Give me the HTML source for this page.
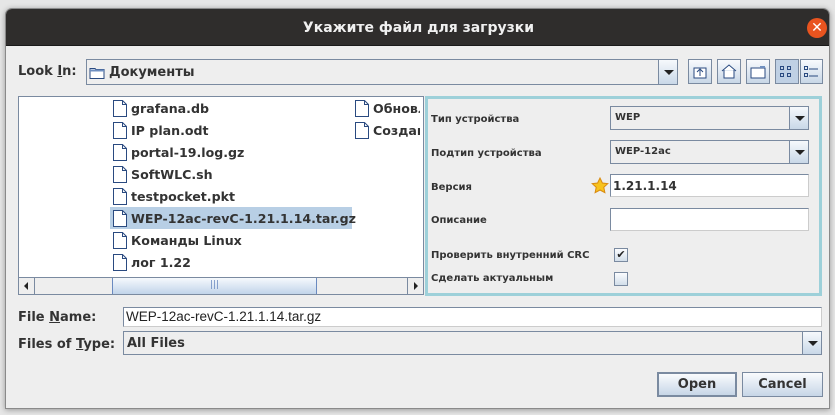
<!DOCTYPE html>
<html><head><meta charset="utf-8"><style>
*{margin:0;padding:0;box-sizing:border-box}
body{width:835px;height:415px;background:#e6e6e6;position:relative;overflow:hidden;font-family:"DejaVu Sans","Liberation Sans",sans-serif;color:#333}
.a{position:absolute}
#dlg{left:5px;top:8px;width:825px;height:401px;background:#eeeeee;border:1px solid #8a8a8a;border-radius:7px 7px 0 0;box-shadow:0 1px 6px rgba(0,0,0,.35);overflow:hidden}
#title{left:0;top:0;width:825px;height:37px;background:#2f2d2c;color:#f0f0f0;font-weight:bold;font-size:14px;line-height:38px;text-align:center;border-bottom:1px solid #1a1a1a}
.lbl{font-size:13px;font-weight:bold;color:#333}
.combo{border:1px solid #7a8aa0;background:#eeeeee}
.arrow{position:absolute;right:0;top:0;bottom:0;width:19px;border-left:1px solid #7a8aa0;background:linear-gradient(#f6f9fc,#c9d8e8)}
.arrow:after{content:"";position:absolute;left:5px;top:50%;margin-top:-2px;border-left:5px solid transparent;border-right:5px solid transparent;border-top:5px solid #222}
.tb{top:59px;width:24px;height:25px;border:1px solid #7a8aa0;background:linear-gradient(#f8fafd,#c8d7e7)}
.file{font-size:12.6px;font-weight:bold;color:#333;height:22px;line-height:23px;padding-left:18px;white-space:nowrap}
.file svg{position:absolute;left:0;top:3px}
.pl{font-size:10px;font-weight:bold;color:#333;left:431px}
.tf{background:#fff;border:1px solid #7a8aa0;border-right-color:#ccc;border-bottom-color:#ccc}
.cb{width:14px;height:14px;border:1px solid #7a8aa0;background:linear-gradient(#fbfcfe,#d2deea)}
.btn{top:372px;height:25px;border:1px solid #7a8aa0;background:linear-gradient(#f9fbfd,#c7d6e7);font-weight:bold;font-size:13px;text-align:center;line-height:24px;color:#333}
</style></head><body>
<div id="dlg" class="a">
<div id="title" class="a">Укажите файл для загрузки</div>
<div class="a" style="left:801px;top:9px;width:20px;height:20px;border-radius:50%;background:#e9541f;color:#fff;font-size:14px;line-height:20px;text-align:center">✕</div>
</div>

<div class="a lbl" style="left:18px;top:64px">Look <u>I</u>n:</div>
<div class="a combo" style="left:86px;top:59px;width:592px;height:26px">
<svg class="a" style="left:2px;top:6px" width="16" height="13"><path d="M1 2.5h5l1 1h8v9H1z" fill="#fff" stroke="#2a4a80"/><path d="M1 4.5h14" stroke="#6f8fc0" stroke-width="2"/></svg>
<div class="a lbl" style="left:22px;top:5px">Документы</div>
<div class="arrow"></div></div>
<div class="a tb" style="left:688px"><svg width="22" height="23"><path d="M5 8h12v10H5z" fill="#fff" stroke="#2a4a80"/><path d="M11 16v-6M8 12l3-3 3 3" stroke="#2a4a80" fill="none"/></svg></div>
<div class="a tb" style="left:717px"><svg width="22" height="23"><path d="M4 11l7-6 7 6M6 10v8h10v-8" fill="#fff" stroke="#2a4a80"/></svg></div>
<div class="a tb" style="left:746px"><svg width="22" height="23"><path d="M4 8h14v10H4z" fill="#fff" stroke="#2a4a80"/><path d="M13 7h5" stroke="#6f8fc0" stroke-width="2"/></svg></div>
<div class="a tb" style="left:775px;background:#bfd0e4"><svg width="22" height="23"><g fill="none" stroke="#2a4a80"><rect x="4.5" y="6.5" width="3" height="3"/><rect x="11.5" y="6.5" width="3" height="3"/><rect x="4.5" y="13.5" width="3" height="3"/><rect x="11.5" y="13.5" width="3" height="3"/></g></svg></div>
<div class="a tb" style="left:800px;width:23px"><svg width="21" height="23"><g fill="none" stroke="#2a4a80"><rect x="3.5" y="6.5" width="3" height="3"/><rect x="3.5" y="13.5" width="3" height="3"/><path d="M8 9h9M8 16h9"/></g></svg></div>

<div class="a" style="left:18px;top:96px;width:406px;height:199px;background:#fff;border:1px solid #7a8aa0;overflow:hidden">
<div class="a" style="left:91px;top:110px;width:242px;height:22px;background:#b8cfe5"></div>
</div>

<div class="a" style="left:18px;top:277px;width:406px;height:18px;border:1px solid #7a8aa0;background:#eeeeee">
<div class="a" style="left:0;top:0;width:16px;height:16px;border-right:1px solid #7a8aa0"><div class="a" style="left:5px;top:4px;border-top:4px solid transparent;border-bottom:4px solid transparent;border-right:4px solid #222"></div></div>
<div class="a" style="left:93px;top:0;width:205px;height:16px;border-left:1px solid #6a8ac0;border-right:1px solid #6a8ac0;background:linear-gradient(#f6f9fd,#c1d4ea);text-align:center;font-size:9px;line-height:15px;color:#6a8ac0">|||</div>
<div class="a" style="right:0;top:0;width:16px;height:16px;border-left:1px solid #7a8aa0"><div class="a" style="left:6px;top:4px;border-top:4px solid transparent;border-bottom:4px solid transparent;border-left:4px solid #222"></div></div>
</div>

<div class="a" style="left:425px;top:96px;width:397px;height:200px;border:3px solid #9dd0d9;background:#eeeeee"></div>
<div class="a pl" style="top:114px">Тип устройства</div>
<div class="a pl" style="top:148px">Подтип устройства</div>
<div class="a pl" style="top:182px">Версия</div>
<div class="a pl" style="top:215px">Описание</div>
<div class="a pl" style="top:250px">Проверить внутренний CRC</div>
<div class="a pl" style="top:273px">Сделать актуальным</div>
<div class="a combo" style="left:610px;top:106px;width:199px;height:24px"><div class="a" style="left:4px;top:5px;font-size:10px;font-weight:bold">WEP</div><div class="arrow"></div></div>
<div class="a combo" style="left:610px;top:140px;width:199px;height:24px"><div class="a" style="left:4px;top:5px;font-size:10px;font-weight:bold">WEP-12ac</div><div class="arrow"></div></div>
<svg class="a" style="left:591px;top:177px" width="18" height="18"><path d="M9 1l2.4 5 5.4.6-4 3.7 1.1 5.4L9 13l-4.9 2.7 1.1-5.4-4-3.7 5.4-.6z" fill="#f7c21c" stroke="#d88a10"/></svg>
<div class="a tf" style="left:610px;top:174px;width:199px;height:23px"><div class="a" style="left:2px;top:4px;font-size:12px;font-weight:bold">1.21.1.14</div></div>
<div class="a tf" style="left:610px;top:208px;width:199px;height:23px"></div>
<div class="a cb" style="left:614px;top:248px;font-size:11px;line-height:12px;text-align:center;color:#222">✔</div>
<div class="a cb" style="left:614px;top:272px"></div>

<div class="a lbl" style="left:18px;top:310px">File <u>N</u>ame:</div>
<div class="a tf" style="left:123px;top:307px;width:699px;height:20px"><div class="a" style="left:2px;top:1px;font-size:13.5px;font-family:'Liberation Sans',sans-serif;color:#222">WEP-12ac-revC-1.21.1.14.tar.gz</div></div>
<div class="a lbl" style="left:18px;top:337px">Files of <u>T</u>ype:</div>
<div class="a combo" style="left:123px;top:331px;width:699px;height:24px"><div class="a lbl" style="left:3px;top:4px">All Files</div><div class="arrow"></div></div>

<div class="a btn" style="left:657px;width:80px;border-width:2px;line-height:22px">Open</div>
<div class="a btn" style="left:742px;width:81px">Cancel</div>

<div class="a" style="left:113px;top:97px;width:307px;height:180px;overflow:hidden">
<div class="file a" style="left:0;top:0"><svg width="14" height="17"><path d="M.5.5h9l4 4v12H.5z" fill="#fff" stroke="#2a4a80"/><path d="M9.5.5v4h4" fill="none" stroke="#2a4a80"/></svg>grafana.db</div>
<div class="file a" style="left:0;top:22px"><svg width="14" height="17"><path d="M.5.5h9l4 4v12H.5z" fill="#fff" stroke="#2a4a80"/><path d="M9.5.5v4h4" fill="none" stroke="#2a4a80"/></svg>IP plan.odt</div>
<div class="file a" style="left:0;top:44px"><svg width="14" height="17"><path d="M.5.5h9l4 4v12H.5z" fill="#fff" stroke="#2a4a80"/><path d="M9.5.5v4h4" fill="none" stroke="#2a4a80"/></svg>portal-19.log.gz</div>
<div class="file a" style="left:0;top:66px"><svg width="14" height="17"><path d="M.5.5h9l4 4v12H.5z" fill="#fff" stroke="#2a4a80"/><path d="M9.5.5v4h4" fill="none" stroke="#2a4a80"/></svg>SoftWLC.sh</div>
<div class="file a" style="left:0;top:88px"><svg width="14" height="17"><path d="M.5.5h9l4 4v12H.5z" fill="#fff" stroke="#2a4a80"/><path d="M9.5.5v4h4" fill="none" stroke="#2a4a80"/></svg>testpocket.pkt</div>
<div class="file a" style="left:0;top:110px"><svg width="14" height="17"><path d="M.5.5h9l4 4v12H.5z" fill="#fff" stroke="#2a4a80"/><path d="M9.5.5v4h4" fill="none" stroke="#2a4a80"/></svg>WEP-12ac-revC-1.21.1.14.tar.gz</div>
<div class="file a" style="left:0;top:132px"><svg width="14" height="17"><path d="M.5.5h9l4 4v12H.5z" fill="#fff" stroke="#2a4a80"/><path d="M9.5.5v4h4" fill="none" stroke="#2a4a80"/></svg>Команды Linux</div>
<div class="file a" style="left:0;top:154px"><svg width="14" height="17"><path d="M.5.5h9l4 4v12H.5z" fill="#fff" stroke="#2a4a80"/><path d="M9.5.5v4h4" fill="none" stroke="#2a4a80"/></svg>лог 1.22</div>
<div class="file a" style="left:242px;top:0"><svg width="14" height="17"><path d="M.5.5h9l4 4v12H.5z" fill="#fff" stroke="#2a4a80"/><path d="M9.5.5v4h4" fill="none" stroke="#2a4a80"/></svg>Обновления</div>
<div class="file a" style="left:242px;top:22px"><svg width="14" height="17"><path d="M.5.5h9l4 4v12H.5z" fill="#fff" stroke="#2a4a80"/><path d="M9.5.5v4h4" fill="none" stroke="#2a4a80"/></svg>Создание</div>
</div>
</body></html>
